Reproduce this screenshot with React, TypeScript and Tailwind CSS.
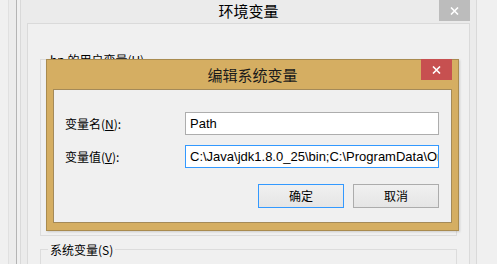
import React from "react";

const cjk = { fontFamily: '"Noto Sans CJK SC", "Noto Sans", sans-serif' };

function CloseGlyph() {
  return (
    <svg width="9" height="8" viewBox="0 0 9 8" className="block">
      <path d="M1 0.5 L8 7.5 M8 0.5 L1 7.5" stroke="#fff" strokeWidth="1.6" />
    </svg>
  );
}

function GroupBox({ label, className, children }: { label: string; className: string; children?: React.ReactNode }) {
  return (
    <fieldset className={`border border-[#dcdcdc] ml-[12px] w-[417px] ${className}`}>
      <legend className="ml-[7px] px-[2px] text-[12px] leading-[16px] text-black" style={cjk}>
        {label}
      </legend>
      {children}
    </fieldset>
  );
}

export default function App() {
  return (
    <div className="relative w-[497px] h-[264px] overflow-hidden bg-[#f0f0f0] select-none" style={cjk}>
      {/* windows behind */}
      <div className="absolute inset-0 flex">
        <div className="w-[8px] bg-[#f0f0f0]" />
        <div className="w-[8px] bg-[#ececec] border-l border-[#e0e0e0]" />
        <div className="w-[4px] bg-[#f0f0f0] border-l border-[#b4b4b4]" />
        <div className="flex-1" />
        <div className="w-[10px] bg-[#f0f0f0]" />
        <div className="w-[6px] bg-[#ececec] border-l border-[#d9d9d9]" />
        <div className="flex-1 bg-[#f0f0f0] border-l border-[#dedede] pt-[84px] pl-[1px] text-[13px] leading-[16px] text-black whitespace-nowrap">
          提
        </div>
      </div>

      {/* 环境变量 */}
      <div className="absolute left-[20px] top-[-1px] w-[457px] h-[300px] flex flex-col bg-[#ebebeb] border border-[#d9d9d9]">
        <div className="relative h-[30px] flex items-center justify-center text-[15px] text-black">
          环境变量
          <div className="absolute right-[6px] top-0 w-[31px] h-[21px] bg-[#bcbcbc] flex items-center justify-center">
            <CloseGlyph />
          </div>
        </div>
        <div className="flex-1 mx-[6px] bg-[#f0f0f0] border border-[#dadada] flex flex-col">
          <GroupBox label="hp 的用户变量(U)" className="mt-[28px] h-[184px]" />
          <GroupBox label="系统变量(S)" className="mt-[6px] h-[100px]" />
        </div>
      </div>

      {/* 编辑系统变量 */}
      <div className="absolute left-[46px] top-[59px] w-[413px] h-[172px] flex flex-col bg-[#d5ae62] border border-[#a98b4f] shadow-[1px_1px_2px_rgba(0,0,0,0.15)]">
        <div className="relative h-[29px] flex items-center justify-center pt-[1px] text-[15px] text-[#1a1a1a]">
          编辑系统变量
          <div className="absolute right-[6px] top-[-1px] w-[31px] h-[21px] bg-[#c75050] flex items-center justify-center">
            <CloseGlyph />
          </div>
        </div>
        <div className="mx-[6px] h-[134px] bg-[#f0f0f0] border border-[#a48a59] pl-[11px] pt-[22px] flex flex-col text-[12px] text-black">
          <div className="flex items-center h-[23px]">
            <div className="w-[120px]">
              变量名(<u>N</u>):
            </div>
            <div
              className="w-[254px] h-[23px] bg-white border border-[#adadad] pl-[4px] flex items-center text-[13px] overflow-hidden whitespace-nowrap"
              style={{ fontFamily: '"Liberation Sans", Arial, sans-serif' }}
            >
              Path
            </div>
          </div>
          <div className="flex items-center h-[23px] mt-[10px]">
            <div className="w-[120px]">
              变量值(<u>V</u>):
            </div>
            <div
              className="w-[254px] h-[23px] bg-white border border-[#3399ff] pl-[4px] flex items-center text-[13px] overflow-hidden whitespace-nowrap"
              style={{ fontFamily: '"Liberation Sans", Arial, sans-serif' }}
            >
              C:\Java\jdk1.8.0_25\bin;C:\ProgramData\Oracle\Java\javapath;%SystemRoot%\system32
            </div>
          </div>
          <div className="flex justify-end gap-[9px] mt-[16px] pr-[12px]">
            <div className="w-[86px] h-[24px] flex items-center justify-center border border-[#3399ff] bg-gradient-to-b from-[#f0f0f0] to-[#e5e5e5]">
              确定
            </div>
            <div className="w-[86px] h-[24px] flex items-center justify-center border border-[#acacac] bg-gradient-to-b from-[#f0f0f0] to-[#e5e5e5]">
              取消
            </div>
          </div>
        </div>
      </div>
    </div>
  );
}
